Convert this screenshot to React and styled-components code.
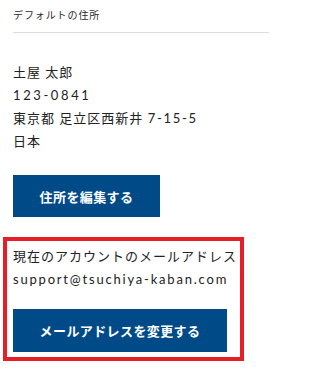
import React from "react";
import styled, { createGlobalStyle } from "styled-components";

const Global = createGlobalStyle`
  html, body { margin: 0; padding: 0; background: #fff; }
  body {
    font-family: "Lato", "Noto Sans CJK JP", sans-serif;
    color: #222;
    -webkit-font-smoothing: antialiased;
  }
`;

const Page = styled.div`
  width: 269px;
  height: 370px;
  overflow: hidden;
  display: flex;
  flex-direction: column;
`;

const Header = styled.div`
  margin-left: 13px;
  padding-top: 8px;
  height: 24px;
  border-bottom: 1px solid #dcdcdc;
  font-size: 10px;
  line-height: 14px;
  letter-spacing: 0.9px;
  color: #2a2a2a;
`;

const Address = styled.div`
  padding: 28px 13px 0;
  display: flex;
  flex-direction: column;
`;

const Line = styled.div`
  font-size: 13px;
  line-height: 23px;
  letter-spacing: ${(p) => p.$spacing || "1px"};
  color: #222;
  white-space: nowrap;
`;

const Latin = styled.span`
  letter-spacing: ${(p) => p.$spacing || "1.7px"};
`;

const Button = styled.button`
  display: flex;
  align-items: center;
  justify-content: center;
  width: ${(p) => p.$width}px;
  height: ${(p) => p.$height || 42}px;
  margin: ${(p) => p.$margin || "0"};
  padding: 0;
  border: none;
  background: #004b87;
  color: #fff;
  font-family: "Lato", "Noto Sans CJK JP", sans-serif;
  font-weight: 700;
  font-size: 13px;
  letter-spacing: 0.4px;
  cursor: pointer;
`;

const Highlight = styled.section`
  margin: 20px 0 0 3px;
  width: 241px;
  box-sizing: border-box;
  border: 4px solid #e61f26;
  padding: 4px 6px 5px;
  display: flex;
  flex-direction: column;
`;

export default function App() {
  return (
    <>
      <Global />
      <Page>
        <Header>デフォルトの住所</Header>
        <Address>
          <Line>土屋 太郎</Line>
          <Line $spacing="2.6px">123-0841</Line>
          <Line>
            東京都 足立区西新井 <Latin>7-15-5</Latin>
          </Line>
          <Line>日本</Line>
          <Button $width={147} $margin="22px 0 0 0">住所を編集する</Button>
        </Address>
        <Highlight>
          <Line>現在のアカウントのメールアドレス</Line>
          <Line $spacing="1.8px">support@tsuchiya-kaban.com</Line>
          <Button $width={214} $height={43} $margin="18px 0 0 0">メールアドレスを変更する</Button>
        </Highlight>
      </Page>
    </>
  );
}
